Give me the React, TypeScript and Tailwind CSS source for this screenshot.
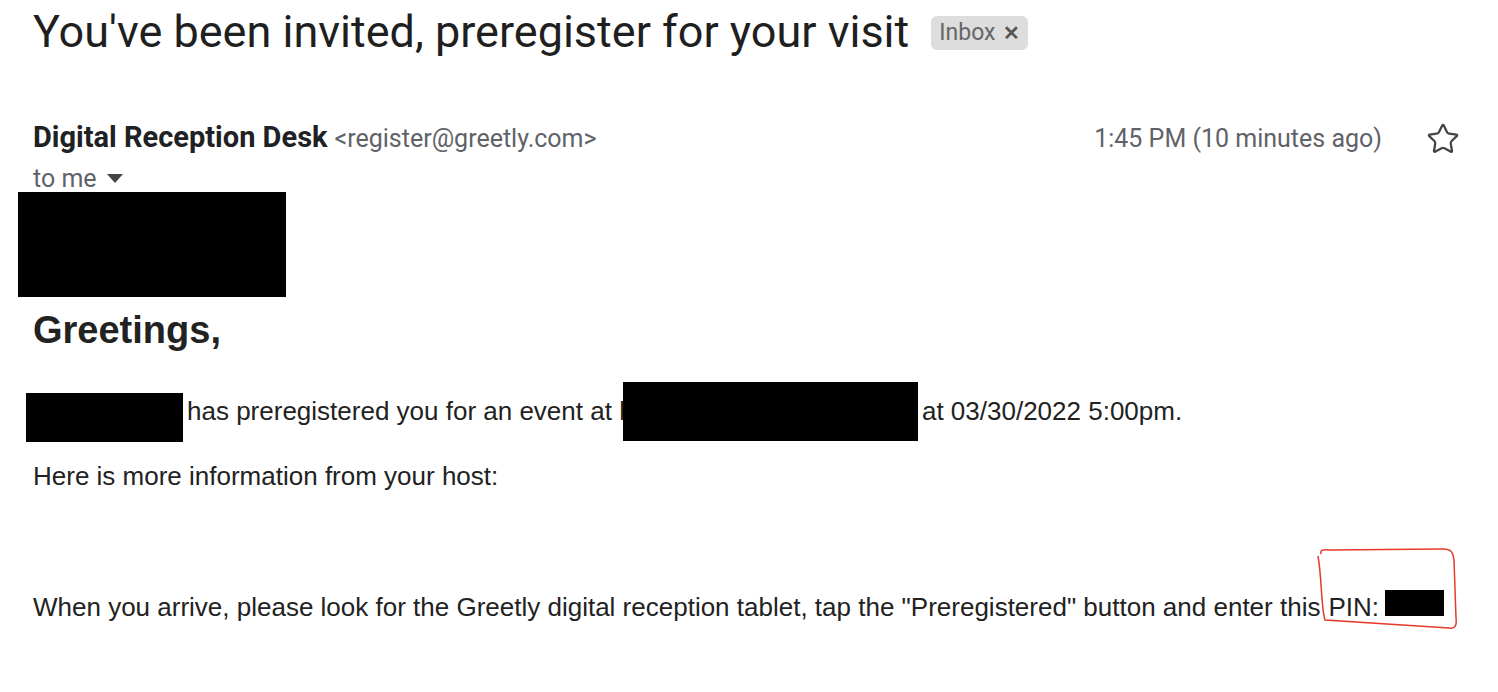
import { Star } from "lucide-react";

const Redact = ({ className }: { className: string }) => (
  <span className={`inline-block bg-black align-middle ${className}`} />
);

export default function App() {
  return (
    <div className="w-[1498px] h-[692px] bg-white overflow-hidden text-[#222]">
      {/* Subject */}
      <div className="flex items-center pl-[33px] pt-[8px] h-[56px]">
        <h1 className="text-[45px] leading-[56px] font-['Roboto',sans-serif] text-[#1f1f1f]">
          You've been invited, preregister for your visit
        </h1>
        <span className="ml-[22px] mt-[2px] flex items-center gap-[8px] h-[34px] px-[8px] rounded-[6px] bg-[#dddddd] text-[#666] text-[23px] font-['Roboto',sans-serif]">
          Inbox
          <span className="text-[20px] font-bold text-[#555]">✕</span>
        </span>
      </div>

      {/* Sender row */}
      <div className="flex items-start mt-[60px] pl-[33px] pr-[38px] font-['Roboto',sans-serif]">
        <div className="flex-1">
          <div className="flex items-baseline gap-[7px]">
            <span className="text-[29px] font-bold text-[#202124]">Digital Reception Desk</span>
            <span className="text-[25px] text-[#5f6368]">&lt;register@greetly.com&gt;</span>
          </div>
          <div className="flex items-center gap-[10px] text-[25px] text-[#5f6368] leading-[28px] mt-[5px]">
            to me
            <svg width="16" height="10" viewBox="0 0 16 10">
              <path d="M0 0 L16 0 L8 9 Z" fill="#444" />
            </svg>
          </div>
        </div>
        <div className="flex items-center gap-[44px] mt-[3px]">
          <span className="text-[25px] text-[#5f6368] leading-[40px]">1:45 PM (10 minutes ago)</span>
          <Star size={34} strokeWidth={1.6} className="text-[#444]" />
        </div>
      </div>

      {/* Body */}
      <div className="font-['Liberation_Sans',Arial,sans-serif] text-[#222]">
        <div className="ml-[18px] -mt-[1px] w-[268px] h-[105px] bg-black" />
        <h2 className="pl-[33px] mt-[11px] text-[38px] font-bold leading-[44px]">Greetings,</h2>
        <p className="pl-[26px] mt-[30px] text-[26px] flex items-center h-[60px]">
          <Redact className="w-[157px] h-[49px] mt-[12px]" />
          <span className="ml-[4px]">has preregistered you for an event at l</span>
          <Redact className="w-[295px] h-[59px] -ml-[2px]" />
          <span className="ml-[4px]">at 03/30/2022 5:00pm.</span>
        </p>
        <p className="pl-[33px] mt-[19px] text-[26px] leading-[30px]">Here is more information from your host:</p>
        <div className="pl-[33px] mt-[101px] text-[26px] leading-[30px] flex items-center">
          <span>When you arrive, please look for the Greetly digital reception tablet, tap the "Preregistered" button and enter this</span>
          <span className="relative ml-[8px] flex items-center">
            <span>PIN:</span>
            <Redact className="ml-[6px] w-[59px] h-[26px] -mt-[8px]" />
            <svg className="absolute -left-[13px] -top-[44px]" width="145" height="84" viewBox="0 0 145 84">
              <path
                d="M6 6 C5 2 8 1 14 2 L128 1 C136 1 138 4 139 12 L141 70 C142 78 140 81 134 80 L10 72 C6 60 7 30 3 8"
                fill="none"
                stroke="#e53a2a"
                strokeWidth="1.5"
              />
            </svg>
          </span>
        </div>
      </div>
    </div>
  );
}
